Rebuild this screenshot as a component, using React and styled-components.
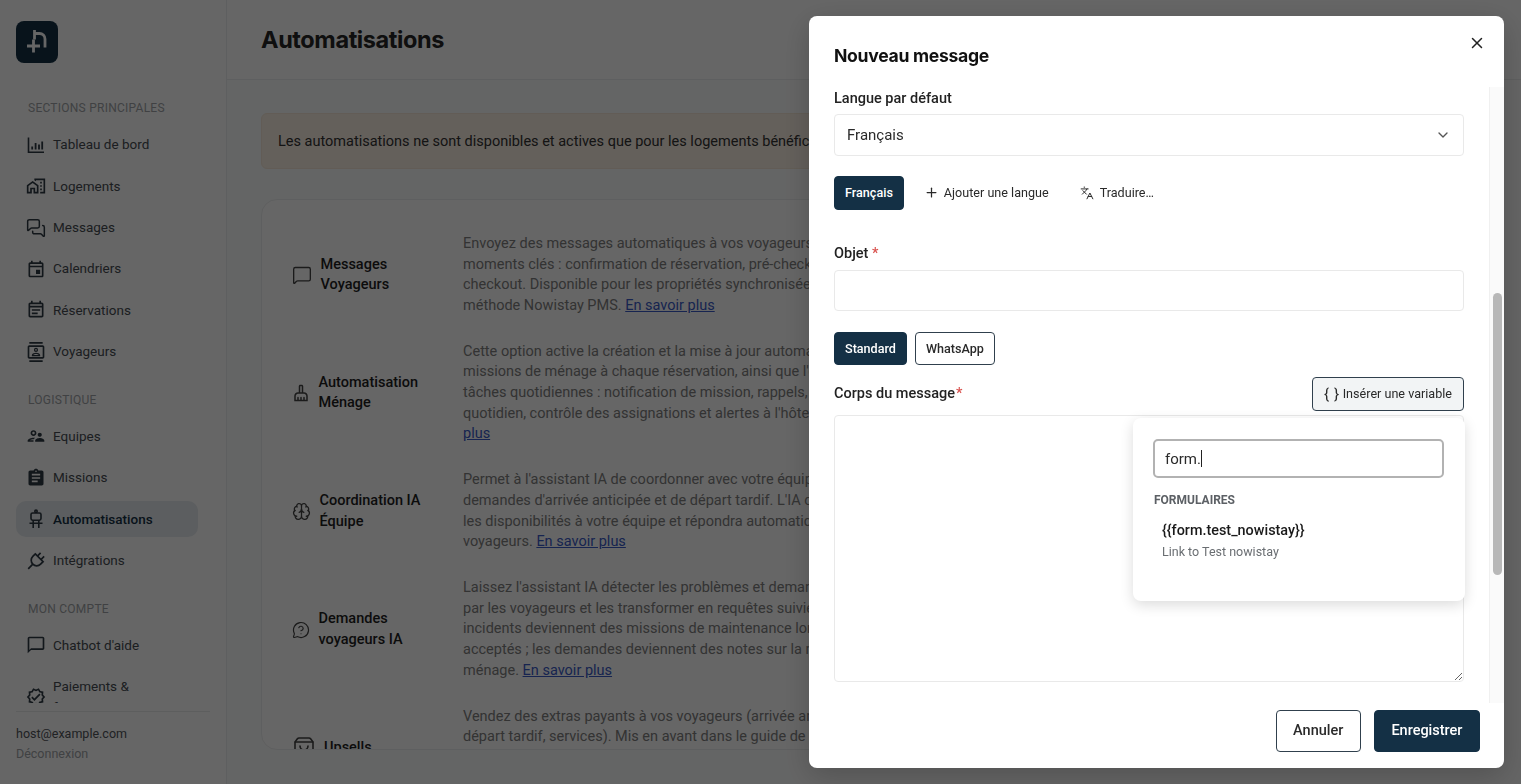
import React from "react";
import styled, { createGlobalStyle } from "styled-components";
import {
  Plus,
  Languages,
  X,
  ChevronDown,
  MessageSquare,
  MessagesSquare,
  Brain,
  MessageCircleQuestion,
  ShoppingBag,
} from "lucide-react";
import {
  MdOutlineHomeWork,
  MdOutlineEvent,
  MdOutlineEventNote,
  MdOutlineContacts,
  MdOutlineSupervisorAccount,
  MdAssignment,
  MdOutlineChatBubbleOutline,
  MdOutlineVerified,
  MdOutlineCleaningServices,
} from "react-icons/md";

const GlobalStyle = createGlobalStyle`
  html, body {
    margin: 0;
    height: 100%;
    overflow: hidden;
    background: #fbfcfc;
    font-family: Roboto, "Liberation Sans", sans-serif;
  }
  * { box-sizing: border-box; }
`;

const Page = styled.div`
  display: flex;
  height: 100vh;
  overflow: hidden;
`;

const Sidebar = styled.aside`
  width: 227px;
  flex-shrink: 0;
  display: flex;
  flex-direction: column;
  padding: 21px 16px 0;
  background: #ffffff;
  border-right: 1px solid #eceeef;
`;

const Logo = styled.div`
  width: 42px;
  height: 42px;
  flex-shrink: 0;
  border-radius: 8px;
  background: #143045;
  display: flex;
`;

const Nav = styled.nav`
  flex: 1;
  min-height: 0;
  overflow: hidden;
  margin-top: 36.2px;
  margin-bottom: 8px;
`;

const SectionLabel = styled.div`
  font-size: 12px;
  line-height: 18px;
  letter-spacing: 0.25px;
  color: #a0a4a7;
  text-transform: uppercase;
  padding-left: 12px;
  margin-bottom: 9.6px;
`;

const Section = styled.div`
  margin-bottom: 21px;
`;

const NavItem = styled.a`
  display: flex;
  align-items: center;
  gap: 7px;
  width: 182px;
  padding: 7.5px 10px;
  margin-bottom: 5.4px;
  border-radius: 10px;
  font-size: 13.5px;
  line-height: 21px;
  background: ${(p) => (p.$active ? "#e6ebef" : "transparent")};
  font-weight: ${(p) => (p.$active ? 500 : 400)};
  color: ${(p) => (p.$active ? "#143045" : "#474d53")};

  svg {
    width: 20px;
    height: 20px;
    flex-shrink: 0;
    color: #2f3a44;
  }
`;

const SideFooter = styled.div`
  border-top: 1px solid #e8eaec;
  padding: 12px 0 0;
  height: 73px;
  flex-shrink: 0;
`;

const UserMail = styled.div`
  font-size: 12.5px;
  line-height: 20px;
  color: #50555a;
`;

const Logout = styled.div`
  font-size: 12.5px;
  line-height: 20px;
  color: #a0a4a7;
`;

const Main = styled.main`
  flex: 1;
  min-width: 0;
  display: flex;
  flex-direction: column;
`;

const TopBar = styled.header`
  height: 80px;
  flex-shrink: 0;
  display: flex;
  align-items: center;
  padding: 0 34px;
  border-bottom: 1px solid #eceeef;
  background: #ffffff;
`;

const PageTitle = styled.h1`
  margin: 0;
  font-family: Inter, sans-serif;
  font-size: 23.5px;
  font-weight: 650;
  letter-spacing: -0.4px;
  color: #262626;
`;

const Content = styled.div`
  padding: 33px 34px 0;
`;

const Banner = styled.div`
  height: 56px;
  display: flex;
  align-items: center;
  padding: 0 16px;
  border: 1px solid #f4e7d6;
  border-radius: 6px;
  background: #f9efe4;
  font-size: 14.5px;
  color: #333333;
  white-space: nowrap;
  overflow: hidden;
`;

const Card = styled.section`
  margin-top: 30px;
  height: 551px;
  overflow: hidden;
  padding: 21.4px 30px 0;
  border: 1px solid #eceeef;
  border-radius: 16px;
  background: #ffffff;
`;

const Row = styled.div`
  display: grid;
  grid-template-columns: 171px 1fr;
  align-items: center;
  padding: 12.6px 0;
`;

const RowTitle = styled.div`
  display: flex;
  align-items: center;
  gap: ${(p) => p.$gap}px;
  font-size: 14.5px;
  line-height: 20.65px;
  font-weight: 500;
  color: #1e1e1e;

  svg {
    width: ${(p) => p.$icon}px;
    height: ${(p) => p.$icon}px;
    flex-shrink: 0;
    color: #444444;
  }
`;

const RowText = styled.p`
  margin: 0;
  font-size: 14.5px;
  line-height: 20.65px;
  color: #808080;
  white-space: nowrap;
`;

const MoreLink = styled.a`
  color: #3a5bc7;
  text-decoration: underline;
`;

const Overlay = styled.div`
  position: fixed;
  inset: 0;
  background: rgba(0, 0, 0, 0.6);
`;

const Modal = styled.div`
  position: fixed;
  top: 16px;
  bottom: 16px;
  right: 17px;
  width: 695px;
  display: flex;
  flex-direction: column;
  background: #ffffff;
  border-radius: 8px;
  box-shadow: 0 8px 30px rgba(0, 0, 0, 0.2);
`;

const ModalHeader = styled.div`
  height: 71px;
  flex-shrink: 0;
  display: flex;
  align-items: flex-start;
  justify-content: space-between;
  padding: 27px 18px 0 25px;
`;

const ModalTitle = styled.h2`
  margin: 0;
  font-family: Inter, sans-serif;
  font-size: 17.6px;
  line-height: 25px;
  font-weight: 650;
  letter-spacing: -0.3px;
  color: #111111;
`;

const CloseButton = styled.button`
  border: none;
  background: none;
  padding: 0;
  display: flex;
  color: #222222;
  margin-top: -9px;
`;

const ScrollArea = styled.div`
  flex: 1;
  min-height: 0;
  display: flex;
`;

const Body = styled.div`
  flex: 1;
  min-width: 0;
  overflow: hidden;
  padding: 1px 25px 0;
`;

const Track = styled.div`
  width: 15px;
  flex-shrink: 0;
  background: #fafafa;
  border-left: 1px solid #f0f0f0;
  padding: 206px 2px 0 3px;
`;

const Thumb = styled.div`
  height: 282px;
  border-radius: 5px;
  background: #b8b8b8;
`;

const FieldLabel = styled.label`
  display: block;
  font-size: 14.5px;
  line-height: 22px;
  font-weight: 500;
  color: #222222;
  margin-top: ${(p) => p.$top || 0}px;
`;

const Required = styled.span`
  color: #d9534f;
  margin-left: ${(p) => p.$left || 0}px;
`;

const SelectBox = styled.div`
  height: 42px;
  margin-top: 4px;
  display: flex;
  align-items: center;
  justify-content: space-between;
  padding: 0 12px;
  border: 1px solid #e9e9e9;
  border-radius: 4px;
  font-size: 15px;
  color: #2a2a2a;

  svg {
    color: #555555;
  }
`;

const TextInput = styled.div`
  height: 41px;
  margin-top: 5px;
  border: 1px solid #e9e9e9;
  border-radius: 4px;
`;

const ButtonRow = styled.div`
  display: flex;
  align-items: center;
  gap: ${(p) => p.$gap}px;
  margin-top: ${(p) => p.$top}px;
`;

const Pill = styled.button`
  height: ${(p) => p.$height}px;
  padding: 0 10px 1px;
  font-family: inherit;
  font-size: 12.6px;
  font-weight: 500;
  border-radius: 4px;
  border: 1px solid ${(p) => (p.$solid ? "#143045" : "#30404d")};
  background: ${(p) => (p.$solid ? "#143045" : "#ffffff")};
  color: ${(p) => (p.$solid ? "#ffffff" : "#2a2a2a")};
`;

const GhostButton = styled.button`
  height: 34px;
  display: flex;
  align-items: center;
  gap: ${(p) => p.$gap}px;
  padding: 0 0 1px ${(p) => p.$left}px;
  border: none;
  background: none;
  font-family: inherit;
  font-size: 12.6px;
  color: #2a2a2a;
`;

const BodyHead = styled.div`
  display: flex;
  align-items: center;
  justify-content: space-between;
  margin-top: 12px;
`;

const VariableButton = styled.button`
  height: 34px;
  width: 152px;
  display: flex;
  align-items: center;
  gap: 3px;
  padding: 0 0 1px 11px;
  border: 1px solid #30404d;
  border-radius: 4px;
  background: #f2f4f5;
  font-family: inherit;
  font-size: 12.6px;
  color: #2a2a2a;
`;

const Braces = styled.span`
  font-size: 15px;
  letter-spacing: 0.6px;
`;

const EditorWrap = styled.div`
  position: relative;
  margin-top: 4px;
  height: 267px;
`;

const Editor = styled.textarea`
  display: block;
  width: 100%;
  height: 100%;
  border: 1px solid #e9e9e9;
  border-radius: 4px;
  outline: none;
  background: #ffffff;
  resize: vertical;
`;

const Popover = styled.div`
  position: absolute;
  top: 3px;
  right: -1px;
  width: 332px;
  height: 183px;
  padding: 21px 21px 21px 20px;
  background: #ffffff;
  border-radius: 8px;
  box-shadow: 0 4px 14px rgba(0, 0, 0, 0.14);
`;

const SearchBox = styled.div`
  height: 39px;
  display: flex;
  align-items: center;
  padding: 0 10px;
  border: 2px solid #b2b2b2;
  border-radius: 5px;
  font-size: 15px;
  color: #2a2a2a;
`;

const Caret = styled.span`
  width: 1px;
  height: 17px;
  background: #222222;
`;

const GroupLabel = styled.div`
  margin: 15px 0 0 1px;
  font-size: 12px;
  line-height: 14px;
  font-weight: 700;
  color: #5c6065;
`;

const VarName = styled.div`
  margin: 15px 0 0 9px;
  font-size: 14.4px;
  line-height: 18px;
  font-weight: 500;
  color: #1a1a1a;
`;

const VarHint = styled.div`
  margin: 4px 0 0 9px;
  font-size: 12.5px;
  line-height: 16px;
  color: #6a6e72;
`;

const ModalFooter = styled.div`
  height: 65px;
  flex-shrink: 0;
  display: flex;
  justify-content: flex-end;
  gap: 13px;
  padding: 7px 24px 0 0;
`;

const FooterButton = styled.button`
  height: 42px;
  padding: 0 16.5px 1px;
  font-family: inherit;
  font-size: 14.5px;
  font-weight: 500;
  border-radius: 4px;
  border: 1px solid ${(p) => (p.$solid ? "#143045" : "#30404d")};
  background: ${(p) => (p.$solid ? "#143045" : "#ffffff")};
  color: ${(p) => (p.$solid ? "#ffffff" : "#2a2a2a")};
`;

const ChartIcon = () => (
  <svg viewBox="0 0 20 20" fill="none" stroke="currentColor" strokeWidth="1.6">
    <path d="M2.5 2.5V17.2h15.5" />
    <path d="M6.2 14.5v-3M9.6 14.5V8M13 14.5V9.5M16.2 14.5V6.5" strokeWidth="1.8" />
  </svg>
);

const RobotIcon = () => (
  <svg viewBox="0 0 20 20" fill="none" stroke="currentColor" strokeWidth="1.6">
    <circle cx="10" cy="2.3" r="1.2" />
    <rect x="5" y="4" width="10" height="7.2" rx="1.6" />
    <path d="M8 7.6h.01M12 7.6h.01" strokeWidth="2" />
    <path d="M7.2 11.2V19M12.8 11.2V19M3.5 14.2h13" />
  </svg>
);

const PlugIcon = () => (
  <svg viewBox="0 0 20 20" fill="none" stroke="currentColor" strokeWidth="1.7">
    <g transform="rotate(45 10 10)">
      <path d="M7.5 1v4.5M12.5 1v4.5" />
      <path d="M4.5 5.5h11v3.5a5.5 5.5 0 0 1-11 0z" />
      <path d="M10 14.5V21" />
    </g>
  </svg>
);

const navSections = [
  {
    label: "Sections principales",
    items: [
      { text: "Tableau de bord", icon: <ChartIcon /> },
      { text: "Logements", icon: <MdOutlineHomeWork /> },
      { text: "Messages", icon: <MessagesSquare strokeWidth={1.8} /> },
      { text: "Calendriers", icon: <MdOutlineEvent /> },
      { text: "Réservations", icon: <MdOutlineEventNote /> },
      { text: "Voyageurs", icon: <MdOutlineContacts /> },
    ],
  },
  {
    label: "Logistique",
    items: [
      { text: "Equipes", icon: <MdOutlineSupervisorAccount /> },
      { text: "Missions", icon: <MdAssignment /> },
      { text: "Automatisations", icon: <RobotIcon />, active: true },
      { text: "Intégrations", icon: <PlugIcon /> },
    ],
  },
  {
    label: "Mon compte",
    items: [
      { text: "Chatbot d'aide", icon: <MdOutlineChatBubbleOutline /> },
      { text: "Paiements & facturation", icon: <MdOutlineVerified /> },
    ],
  },
];

const rows = [
  {
    title: ["Messages", "Voyageurs"],
    icon: <MessageSquare strokeWidth={1.6} />,
    size: 20,
    gap: 8.5,
    lines: [
      "Envoyez des messages automatiques à vos voyageurs aux",
      "moments clés : confirmation de réservation, pré-check-in et",
      "checkout. Disponible pour les propriétés synchronisées avec la",
    ],
    last: "méthode Nowistay PMS. ",
    link: "En savoir plus",
  },
  {
    title: ["Automatisation", "Ménage"],
    icon: <MdOutlineCleaningServices />,
    size: 18,
    gap: 8.5,
    lines: [
      "Cette option active la création et la mise à jour automatiques des",
      "missions de ménage à chaque réservation, ainsi que l'envoi des",
      "tâches quotidiennes : notification de mission, rappels, suivi",
      "quotidien, contrôle des assignations et alertes à l'hôte. En savoir",
    ],
    last: "",
    link: "plus",
  },
  {
    title: ["Coordination IA", "Équipe"],
    icon: <Brain strokeWidth={1.6} />,
    size: 19,
    gap: 8.5,
    lines: [
      "Permet à l'assistant IA de coordonner avec votre équipe les",
      "demandes d'arrivée anticipée et de départ tardif. L'IA communiquera",
      "les disponibilités à votre équipe et répondra automatiquement aux",
    ],
    last: "voyageurs. ",
    link: "En savoir plus",
  },
  {
    title: ["Demandes", "voyageurs IA"],
    icon: <MessageCircleQuestion strokeWidth={1.6} />,
    size: 18,
    gap: 8.5,
    lines: [
      "Laissez l'assistant IA détecter les problèmes et demandes signalés",
      "par les voyageurs et les transformer en requêtes suivies. Les",
      "incidents deviennent des missions de maintenance lorsqu'ils sont",
      "acceptés ; les demandes deviennent des notes sur la mission de",
    ],
    last: "ménage. ",
    link: "En savoir plus",
  },
  {
    title: ["Upsells"],
    icon: <ShoppingBag strokeWidth={1.6} />,
    size: 24,
    gap: 8,
    lines: [
      "Vendez des extras payants à vos voyageurs (arrivée anticipée,",
      "départ tardif, services). Mis en avant dans le guide de bienvenue",
      "et les messages automatiques.",
    ],
    last: "",
    link: "En savoir plus",
  },
];

const App = () => {
  return (
    <>
      <GlobalStyle />
      <Page>
        <Sidebar>
          <Logo>
            <svg width="42" height="42" viewBox="0 0 42 42" fill="none" stroke="#ffffff" strokeWidth="2.8">
              <path d="M18 12.5h5.5a5.5 5.5 0 0 1 5.5 5.5v8.5" />
              <path d="M18.5 9v9.5" />
              <path d="M11 25h13M17.5 18.5v13" />
            </svg>
          </Logo>
          <Nav>
            {navSections.map((section) => (
              <Section key={section.label}>
                <SectionLabel>{section.label}</SectionLabel>
                {section.items.map((item) => (
                  <NavItem key={item.text} $active={item.active}>
                    {item.icon}
                    <span>{item.text}</span>
                  </NavItem>
                ))}
              </Section>
            ))}
          </Nav>
          <SideFooter>
            <UserMail>host@example.com</UserMail>
            <Logout>Déconnexion</Logout>
          </SideFooter>
        </Sidebar>

        <Main>
          <TopBar>
            <PageTitle>Automatisations</PageTitle>
          </TopBar>
          <Content>
            <Banner>
              Les automatisations ne sont disponibles et actives que pour les logements bénéficiant d'un abonnement actif.
            </Banner>
            <Card>
              {rows.map((row) => (
                <Row key={row.title[0]}>
                  <RowTitle $icon={row.size} $gap={row.gap}>
                    {row.icon}
                    <span>
                      {row.title.map((t, i) => (
                        <React.Fragment key={t}>
                          {i > 0 && <br />}
                          {t}
                        </React.Fragment>
                      ))}
                    </span>
                  </RowTitle>
                  <RowText>
                    {row.lines.map((line) => (
                      <React.Fragment key={line}>
                        {line}
                        <br />
                      </React.Fragment>
                    ))}
                    {row.last}
                    <MoreLink>{row.link}</MoreLink>
                  </RowText>
                </Row>
              ))}
            </Card>
          </Content>
        </Main>
      </Page>

      <Overlay />

      <Modal>
        <ModalHeader>
          <ModalTitle>Nouveau message</ModalTitle>
          <CloseButton>
            <X size={18} />
          </CloseButton>
        </ModalHeader>

        <ScrollArea>
          <Body>
            <FieldLabel>Langue par défaut</FieldLabel>
            <SelectBox>
              Français
              <ChevronDown size={16} />
            </SelectBox>

            <ButtonRow $gap={0} $top={20}>
              <Pill $solid $height={34}>Français</Pill>
              <GhostButton $left={20} $gap={5}>
                <Plus size={15} />
                Ajouter une langue
              </GhostButton>
              <GhostButton $left={31} $gap={6}>
                <Languages size={14} strokeWidth={1.7} />
                Traduire…
              </GhostButton>
            </ButtonRow>

            <FieldLabel $top={33}>
              Objet <Required>*</Required>
            </FieldLabel>
            <TextInput />

            <ButtonRow $gap={8} $top={21}>
              <Pill $solid $height={33}>Standard</Pill>
              <Pill $height={33}>WhatsApp</Pill>
            </ButtonRow>

            <BodyHead>
              <FieldLabel>
                Corps du message<Required $left={1}>*</Required>
              </FieldLabel>
              <VariableButton>
                <Braces>{"{ }"}</Braces>
                Insérer une variable
              </VariableButton>
            </BodyHead>

            <EditorWrap>
              <Editor />
              <Popover>
                <SearchBox>
                  form.
                  <Caret />
                </SearchBox>
                <GroupLabel>FORMULAIRES</GroupLabel>
                <VarName>{"{{form.test_nowistay}}"}</VarName>
                <VarHint>Link to Test nowistay</VarHint>
              </Popover>
            </EditorWrap>
          </Body>
          <Track>
            <Thumb />
          </Track>
        </ScrollArea>

        <ModalFooter>
          <FooterButton>Annuler</FooterButton>
          <FooterButton $solid>Enregistrer</FooterButton>
        </ModalFooter>
      </Modal>
    </>
  );
};

export default App;
